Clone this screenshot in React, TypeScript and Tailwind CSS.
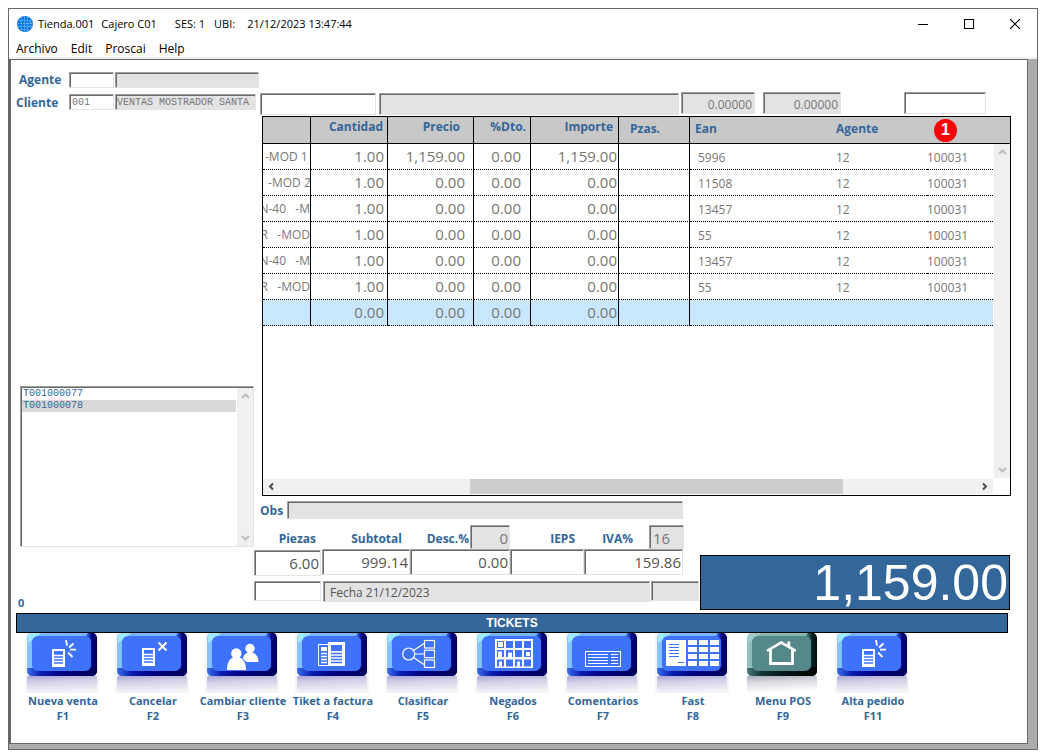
import type { ReactNode } from 'react';
import { clsx } from 'clsx';

interface Line {
  desc: string;
  clipLeft?: boolean;
  cantidad: string;
  precio: string;
  dto: string;
  importe: string;
  ean: string;
  agente: string;
  folio: string;
}

const lines: Line[] = [
  { desc: '-MOD 1', cantidad: '1.00', precio: '1,159.00', dto: '0.00', importe: '1,159.00', ean: '5996', agente: '12', folio: '100031' },
  { desc: ' -MOD 2', cantidad: '1.00', precio: '0.00', dto: '0.00', importe: '0.00', ean: '11508', agente: '12', folio: '100031' },
  { desc: 'N-40   -M', clipLeft: true, cantidad: '1.00', precio: '0.00', dto: '0.00', importe: '0.00', ean: '13457', agente: '12', folio: '100031' },
  { desc: 'R   -MOD', clipLeft: true, cantidad: '1.00', precio: '0.00', dto: '0.00', importe: '0.00', ean: '55', agente: '12', folio: '100031' },
  { desc: 'N-40   -M', clipLeft: true, cantidad: '1.00', precio: '0.00', dto: '0.00', importe: '0.00', ean: '13457', agente: '12', folio: '100031' },
  { desc: 'R   -MOD', clipLeft: true, cantidad: '1.00', precio: '0.00', dto: '0.00', importe: '0.00', ean: '55', agente: '12', folio: '100031' },
  { desc: '', cantidad: '0.00', precio: '0.00', dto: '0.00', importe: '0.00', ean: '', agente: '', folio: '' },
];

const FACE = '#3f72fb';

const receipt = (y: number) => (
  <>
    <rect x="28" y={y + 1} width="11" height="16" fill="none" stroke="#fff" strokeWidth="2" />
    <path d={`M29 ${y + 6.5}h9M29 ${y + 9.5}h9M29 ${y + 12.5}h9M29 ${y + 15.5}h9`} stroke="#fff" strokeWidth="1.3" />
  </>
);

const saleIcon = (
  <>
    {receipt(16)}
    <path d="M41 7l1 5.5M48.5 10.5l-4.5 4M45 16.6h6M43 19.5l4.5 4.5" stroke="#fff" strokeWidth="1.8" />
  </>
);

const cancelIcon = (
  <>
    {receipt(15)}
    <path d="M43.5 9.5l8 8M51.5 9.5l-8 8" stroke="#fff" strokeWidth="2" />
  </>
);

const peopleIcon = (
  <g fill="#fff">
    <circle cx="45" cy="15.5" r="4.7" />
    <path d="M37.5 29c0-5 2-8.5 5.5-9.5h4.5c4 1.5 6 5 6 9.5z" />
    <circle cx="31.3" cy="20.5" r="6.5" fill={FACE} />
    <path d="M36 24l5.5 5v3h-3z" fill={FACE} />
    <circle cx="31.3" cy="20.5" r="5.2" />
    <path d="M22 37c0-6.5 2-11.5 6.5-12.5h6c4.500 1.500 6.500 6 6.500 12.500z" />
  </g>
);

const invoiceIcon = (
  <>
    <rect x="23.5" y="11.5" width="10" height="21" fill="none" stroke="#fff" />
    <rect x="26" y="14" width="6" height="4" fill="#fff" />
    <path d="M26 20.5h6M26 23.5h6M26 26.5h6M26 29.5h6" stroke="#fff" strokeWidth="1.6" />
    <rect x="33" y="9" width="17" height="24" fill="#fff" />
    <rect x="36" y="12" width="11" height="6" fill={FACE} />
    <path d="M36 20.5h11M36 23.5h11M36 26.5h11M36 29.5h11" stroke={FACE} strokeWidth="1.3" />
  </>
);

const shareIcon = (
  <g fill="none" stroke="#fff" strokeWidth="1.2">
    <circle cx="23.7" cy="21" r="6" />
    <path d="M28.5 17.5L39 10.5M30 21h9M28.5 24.5L39 31.5" />
    <rect x="39.5" y="7.5" width="10" height="7.5" />
    <rect x="39.5" y="17.2" width="10" height="7.5" />
    <rect x="39.5" y="27" width="10" height="7.5" />
  </g>
);

const gridIcon = (
  <>
    <rect x="20" y="6" width="38" height="29" fill="#fff" />
    {[8, 17, 26.5].map((y) =>
      [22, 31, 40, 49].map((x) => <rect key={`${x}-${y}`} x={x} y={y} width="7" height="7" fill={FACE} />),
    )}
    <path d="M23 9h5v5h-5zM23 18.5h4v6h-4zM33 19.5h4v5h-4zM51 19h4v4h-4zM24 28.5h3v5h-3zM42 28.5h3v5h-3z" fill="#fff" />
  </>
);

const noteIcon = (
  <>
    <rect x="20.5" y="18.5" width="35" height="15" fill="none" stroke="#fff" />
    <path d="M23 21.5h20M23 24.5h20M23 27.5h20M23 30.5h20M46 21.5h7M46 24.5h7M46 27.5h7M46 30.5h7" stroke="#fff" />
  </>
);

const fastIcon = (
  <>
    <rect x="11" y="7" width="20" height="26" fill="#fff" />
    <path d="M14 11.5h10M14 14.5h10M14 17.5h10M14 20.5h10M14 23.5h10M23 29.5h6" stroke={FACE} />
    {[7, 14, 21, 28].map((y) =>
      [33, 44, 55].map((x) => <rect key={`${x}-${y}`} x={x} y={y} width="9" height="5" fill="#fff" />),
    )}
  </>
);

const houseIcon = (
  <g fill="none" stroke="#fff">
    <path d="M22 17.8L36.3 9.5L50.7 17.8" strokeWidth="2.6" />
    <path d="M25.5 16v14.5h22V16" strokeWidth="2.8" />
    <path d="M43.8 8.5v5" strokeWidth="2.8" />
  </g>
);

interface Action {
  label: string;
  hotkey: string;
  icon: ReactNode;
  teal?: boolean;
}

const actions: Action[] = [
  { label: 'Nueva venta', hotkey: 'F1', icon: saleIcon },
  { label: 'Cancelar', hotkey: 'F2', icon: cancelIcon },
  { label: 'Cambiar cliente', hotkey: 'F3', icon: peopleIcon },
  { label: 'Tiket a factura', hotkey: 'F4', icon: invoiceIcon },
  { label: 'Clasificar', hotkey: 'F5', icon: shareIcon },
  { label: 'Negados', hotkey: 'F6', icon: gridIcon },
  { label: 'Comentarios', hotkey: 'F7', icon: noteIcon },
  { label: 'Fast', hotkey: 'F8', icon: fastIcon },
  { label: 'Menu POS', hotkey: 'F9', icon: houseIcon, teal: true },
  { label: 'Alta pedido', hotkey: 'F11', icon: saleIcon },
];

function KeyDefs() {
  return (
    <svg className="absolute h-0 w-0" aria-hidden="true">
      <defs>
        <linearGradient id="side-blue" x1="0" x2="1" y1="0" y2="0">
          <stop offset="0" stopColor="#8cc6ff" />
          <stop offset="0.1" stopColor="#7db8fd" />
          <stop offset="0.85" stopColor="#3c6ef0" />
          <stop offset="0.93" stopColor="#00007c" />
          <stop offset="1" stopColor="#000060" />
        </linearGradient>
        <linearGradient id="side-teal" x1="0" x2="1" y1="0" y2="0">
          <stop offset="0" stopColor="#98c4c4" />
          <stop offset="0.1" stopColor="#8ab8b8" />
          <stop offset="0.85" stopColor="#4a7c7c" />
          <stop offset="0.93" stopColor="#062424" />
          <stop offset="1" stopColor="#000c0c" />
        </linearGradient>
        <linearGradient id="base-blue" x1="0" x2="1" y1="0" y2="0">
          <stop offset="0" stopColor="#3c70e8" />
          <stop offset="0.2" stopColor="#0a1eb4" />
          <stop offset="0.5" stopColor="#000080" />
          <stop offset="1" stopColor="#00005a" />
        </linearGradient>
        <linearGradient id="base-teal" x1="0" x2="1" y1="0" y2="0">
          <stop offset="0" stopColor="#4a7878" />
          <stop offset="0.2" stopColor="#123838" />
          <stop offset="0.5" stopColor="#041818" />
          <stop offset="1" stopColor="#000" />
        </linearGradient>
        <linearGradient id="reflection" x1="0" x2="0.15" y1="0" y2="1">
          <stop offset="0" stopColor="#a5a0d0" />
          <stop offset="0.4" stopColor="#d2cfe8" />
          <stop offset="1" stopColor="#f5f4f6" />
        </linearGradient>
        <linearGradient id="reflection-teal" x1="0" x2="0.15" y1="0" y2="1">
          <stop offset="0" stopColor="#a2a2b0" />
          <stop offset="0.4" stopColor="#d8d8e0" />
          <stop offset="1" stopColor="#fff" />
        </linearGradient>
      </defs>
    </svg>
  );
}

function ActionKey({ label, hotkey, icon, teal }: Action) {
  return (
    <button type="button" className="flex w-[90px] flex-col items-center text-[11px] leading-[15px] font-bold text-[#336699]">
      <svg width="74" height="60" viewBox="0 0 74 60" aria-hidden="true">
        {!teal && <rect width="74" height="60" fill="#f5f4f6" />}
        <path d="M2 60V45q0 -3 5 -3h60q5 0 5 3v15z" fill={teal ? 'url(#reflection-teal)' : 'url(#reflection)'} />
        <path d="M2 4q1 -3 3 -4h64q2 1 3 4v33q0 6 -6 6h-58q-6 0 -6 -6z" fill={teal ? 'url(#side-teal)' : 'url(#side-blue)'} />
        <path d="M2 35l6 0l4 2h50l5 -3l5 1v2q0 6 -6 6h-58q-6 0 -6 -6z" fill={teal ? 'url(#base-teal)' : 'url(#base-blue)'} />
        <path d="M5 0h12l-7 5l-7 5v-7q1 -2 2 -3z" fill={teal ? '#a6d0d0' : '#a8f4fc'} opacity="0.8" />
        <path d="M16 0h47l-3 4h-45z" fill={teal ? '#86b4b4' : '#7cb4fc'} />
        <rect x="7" y="3" width="59" height="35" rx="6" fill={teal ? '#558889' : FACE} />
        {icon}
      </svg>
      <span className="pl-0.5 whitespace-nowrap">{label}</span>
      <span className="pl-0.5">{hotkey}</span>
    </button>
  );
}

interface FieldProps {
  id?: string;
  label?: string;
  value?: string;
  className?: string;
}

function Field({ id, label, value = '', className }: FieldProps) {
  return (
    <input
      id={id}
      aria-label={label}
      defaultValue={value}
      className={clsx(
        'min-w-0 rounded-none border border-t-[#a0a0a0] border-r-[#e3e3e3] border-b-[#e3e3e3] border-l-[#a0a0a0] shadow-[inset_1px_1px_0_#696969] outline-none',
        className,
      )}
    />
  );
}

function Chevron({ dir }: { dir: 'up' | 'down' | 'left' | 'right' }) {
  const d = {
    up: 'M1 6l3.5 -3.5l3.5 3.5',
    down: 'M1 3l3.5 3.5l3.5 -3.5',
    left: 'M6 1.5l-3 3l3 3',
    right: 'M3 1.5l3 3l-3 3',
  }[dir];
  return (
    <svg width="9" height="9" viewBox="0 0 9 9" aria-hidden="true">
      <path d={d} fill="none" stroke="currentColor" strokeWidth="2" />
    </svg>
  );
}

function TitleBar() {
  return (
    <header className="flex h-[30px] items-center justify-between pl-2">
      <div className="flex items-center text-[11px]">
        <svg width="16" height="16" viewBox="0 0 16 16" className="mr-[5px]" aria-hidden="true">
          <circle cx="8" cy="8" r="8" fill="#1279e4" />
          <path
            d="M2 4.500h12M1 7.500h14M1 10.500h14M4 13.500h8M4.500 2v12M7.500 1v14M10.500 1v14M13.500 4v8"
            stroke="#6cc4fa"
            strokeWidth="0.8"
            strokeDasharray="1.500 1"
          />
        </svg>
        <span>Tienda.001</span>
        <span className="ml-[7px]">Cajero C01</span>
        <span className="ml-[18px]">SES: 1</span>
        <span className="ml-[9px]">UBI:</span>
        <span className="ml-3">21/12/2023 13:47:44</span>
      </div>
      <div className="flex">
        <button type="button" aria-label="Minimizar" className="flex h-7 w-11 items-center justify-center">
          <svg width="10" height="10"><path d="M0 5.500h10" stroke="#000" /></svg>
        </button>
        <button type="button" aria-label="Maximizar" className="flex h-7 w-12 items-center justify-center">
          <svg width="10" height="10"><rect x="0.5" y="0.5" width="9" height="9" fill="none" stroke="#000" /></svg>
        </button>
        <button type="button" aria-label="Cerrar" className="flex h-7 w-11 items-center justify-center">
          <svg width="10" height="10"><path d="M0 0l10 10M10 0l-10 10" stroke="#000" strokeWidth="1.2" /></svg>
        </button>
      </div>
    </header>
  );
}

function LinesTable() {
  const head = 'border-b border-black';
  const col = 'border-r border-r-black';
  const cell = 'border-b border-b-black p-0 [border-bottom-style:dotted]';
  return (
    <div className="ml-2 flex h-[380px] flex-col border border-black">
      <div className="flex min-h-0 flex-1">
        <div className="min-w-0 flex-1">
          <table className="w-full table-fixed border-separate border-spacing-0 text-[#777777]">
            <colgroup>
              <col className="w-12" />
              <col className="w-[77px]" />
              <col className="w-[86px]" />
              <col className="w-[57px]" />
              <col className="w-[88px]" />
              <col className="w-[71px]" />
              <col />
              <col className="w-[91px]" />
              <col className="w-[66px]" />
            </colgroup>
            <thead>
              <tr className="h-[27px] bg-[#c8c8c8] text-xs text-[#336699]">
                <th className={clsx(head, col)} />
                <th className={clsx(head, col, 'pr-1 pb-1.5 text-right')}>Cantidad</th>
                <th className={clsx(head, col, 'pr-[13px] pb-1.5 text-right')}>Precio</th>
                <th className={clsx(head, col, 'pr-1 pb-1.5 text-right')}>%Dto.</th>
                <th className={clsx(head, col, 'pr-[5px] pb-1.5 text-right')}>Importe</th>
                <th className={clsx(head, col, 'pb-0.5 pl-[11px] text-left')}>Pzas.</th>
                <th className={clsx(head, 'pb-0.5 pl-[5px] text-left')}>Ean</th>
                <th className={clsx(head, 'pb-0.5 text-left')}>Agente</th>
                <th className={clsx(head, 'p-0 pl-[7px]')}>
                  <span className="flex size-[23px] items-center justify-center rounded-full bg-[#fb0007] font-['Liberation_Sans'] text-base leading-none text-white">
                    1
                  </span>
                </th>
              </tr>
            </thead>
            <tbody className="text-[15px] leading-none">
              {lines.map((line, i) => (
                <tr key={i} className={clsx('h-[26px]', i === lines.length - 1 && 'bg-[#c9e7ff]')}>
                  <td className={clsx(cell, col)}>
                    <div
                      className={clsx(
                        'flex overflow-hidden text-xs whitespace-pre',
                        line.clipLeft ? 'justify-end' : 'pl-0.5',
                      )}
                    >
                      <span className="shrink-0">{line.desc}</span>
                    </div>
                  </td>
                  <td className={clsx(cell, col, 'pr-[3px] text-right')}>{line.cantidad}</td>
                  <td className={clsx(cell, col, 'pr-2 text-right')}>{line.precio}</td>
                  <td className={clsx(cell, col, 'pr-[9px] text-right')}>{line.dto}</td>
                  <td className={clsx(cell, col, 'pr-px text-right')}>{line.importe}</td>
                  <td className={clsx(cell, col)} />
                  <td className={clsx(cell, 'pt-0.5 pl-2 text-xs')}>{line.ean}</td>
                  <td className={clsx(cell, 'pt-0.5 text-xs')}>{line.agente}</td>
                  <td className={clsx(cell, 'pt-0.5 text-xs')}>{line.folio}</td>
                </tr>
              ))}
            </tbody>
          </table>
        </div>
        <div className="flex w-[17px] flex-col">
          <div className="h-[27px] border-b border-black bg-[#c8c8c8]" />
          <div className="ml-px flex flex-1 flex-col items-center justify-between bg-[#f0f0f0] py-1 text-[#bdbdbd]">
            <Chevron dir="up" />
            <Chevron dir="down" />
          </div>
        </div>
      </div>
      <div className="mt-px mr-[17px] mb-px flex h-[15px] items-center bg-[#f0f0f0] px-1 text-[#505050]">
        <Chevron dir="left" />
        <div className="grid h-full flex-1 grid-cols-[194fr_373fr_137fr]">
          <div className="col-start-2 bg-[#cdcdcd]" />
        </div>
        <Chevron dir="right" />
      </div>
    </div>
  );
}

export default function App() {
  return (
    <div className="flex min-h-screen bg-white p-2 pb-[5px] font-['Open_Sans','Noto_Sans',sans-serif] text-black">
      <KeyDefs />
      <div className="flex flex-1 flex-col border border-[#666666]">
        <TitleBar />
        <nav className="flex h-5 items-center gap-[13px] border-b-2 border-[#f0f0f0] pt-0.5 pl-[7px] text-xs">
          <button type="button">Archivo</button>
          <button type="button">Edit</button>
          <button type="button">Proscai</button>
          <button type="button">Help</button>
        </nav>
        <div className="flex flex-1 flex-col bg-[#ababab] pr-[9px] pb-[5px]">
          <main className="flex-1 border border-l-2 border-[#666666] bg-white pt-3">
            <div className="flex h-5 items-start">
              <label htmlFor="agente" className="w-[58px] pl-2 text-xs leading-4 font-bold text-[#336699]">Agente</label>
              <Field id="agente" className="h-4 w-[45px]" />
              <Field label="Nombre del agente" className="ml-px h-4 w-36 bg-[#e3e3e3]" />
            </div>
            <div className="flex h-6 items-start text-[#777777]">
              <label htmlFor="cliente" className="w-[58px] pt-[3px] pl-[5px] text-xs leading-4 font-bold text-[#336699]">
                Cliente
              </label>
              <Field id="cliente" value="001" className="mt-0.5 h-4 w-[45px] px-[2px] font-['Liberation_Mono'] text-[10px]" />
              <Field
                label="Nombre del cliente"
                value="VENTAS MOSTRADOR SANTA"
                className="mt-0.5 ml-px h-4 w-[141px] bg-[#e3e3e3] px-px font-['Liberation_Mono'] text-[10px]"
              />
              <Field label="Clave" className="mt-px ml-1 h-[22px] w-[116px]" />
              <Field label="Descripcion" className="mt-px ml-[3px] h-[22px] w-[300px] bg-[#e3e3e3]" />
              <Field label="Cantidad" value="0.00000" className="ml-[2px] h-[22px] w-[74px] bg-[#e3e3e3] px-[2px] pt-0.5 text-right text-xs" />
              <Field label="Precio" value="0.00000" className="ml-2 h-[22px] w-[78px] bg-[#e3e3e3] px-[2px] pt-0.5 text-right text-xs" />
              <Field label="Codigo" className="mr-[41px] ml-auto h-[22px] w-[82px]" />
            </div>

            <div className="flex">
              <aside className="w-[243px] shrink-0 pt-[270px]">
                <div className="ml-[9px] flex h-[161px] w-[234px] border border-t-[#a0a0a0] border-r-[#e3e3e3] border-b-[#e3e3e3] border-l-[#a0a0a0] shadow-[inset_1px_1px_0_#696969]">
                  <ul className="mt-px ml-px flex-1 font-['Liberation_Mono'] text-[10px] leading-3 text-[#336699]">
                    <li className="pl-px">T001000077</li>
                    <li className="bg-[#d9d9d9] pl-px">T001000078</li>
                  </ul>
                  <div className="mt-px ml-px flex w-4 flex-col items-center justify-between bg-[#f0f0f0] py-1 text-[#bdbdbd]">
                    <Chevron dir="up" />
                    <Chevron dir="down" />
                  </div>
                </div>
                <p className="mt-[50px] ml-[7px] text-[11px] leading-3 font-bold text-[#336699]">0</p>
              </aside>

              <section className="mr-4 min-w-0 flex-1">
                <LinesTable />
                <div className="flex items-start">
                  <div className="w-[446px] shrink-0 pt-[5px] text-xs">
                    <div className="flex h-6 items-start">
                      <label htmlFor="obs" className="w-[33px] pt-0.5 pl-[6px] font-bold text-[#336699]">Obs</label>
                      <Field id="obs" className="h-[18px] w-[396px] bg-[#e3e3e3]" />
                    </div>
                    <div className="flex h-6 items-center font-bold text-[#336699]">
                      <span className="w-[62px] pt-1 text-right">Piezas</span>
                      <span className="w-[86px] pt-1 text-right">Subtotal</span>
                      <span className="w-[67px] pt-1 text-right">Desc.%</span>
                      <Field label="Descuento" value="0" className="ml-px h-6 w-10 bg-[#e3e3e3] px-px pt-0.5 text-right text-[15px] font-normal text-[#777777]" />
                      <span className="w-[65px] pt-1 text-right">IEPS</span>
                      <span className="w-[58px] pt-1 text-right">IVA%</span>
                      <Field label="Porcentaje IVA" value="16" className="ml-4 h-6 w-[35px] bg-[#e3e3e3] px-[3px] pt-0.5 text-[15px] font-normal text-[#777777]" />
                    </div>
                    <div className="flex text-[15px] text-[#555555]">
                      <Field label="Piezas" value="6.00" className="mt-px h-[26px] w-[67px] px-px text-right" />
                      <Field label="Subtotal" value="999.14" className="ml-px h-[26px] w-[88px] px-px text-right" />
                      <Field label="Importe descuento" value="0.00" className="h-[26px] w-[100px] px-px text-right" />
                      <Field label="IEPS" className="h-[26px] w-[74px] px-px text-right" />
                      <Field label="IVA" value="159.86" className="h-[26px] w-[99px] px-px text-right" />
                    </div>
                    <div className="mt-[5px] flex text-[#555555]">
                      <Field label="Tipo" className="h-5 w-[67px]" />
                      <Field label="Fecha" value="Fecha 21/12/2023" className="ml-[2px] h-[21px] w-[327px] bg-[#e3e3e3] px-[6px] pt-0.5" />
                      <Field label="Estado" className="ml-px h-5 w-12 bg-[#e3e3e3]" />
                    </div>
                  </div>
                  <output className="mt-[59px] mr-px flex h-[55px] flex-1 items-center justify-end border border-black bg-[#336699] pr-px font-['Liberation_Sans'] text-[50px] leading-none text-white">
                    1,159.00
                  </output>
                </div>
              </section>
            </div>

            <h2 className="mt-[3px] mr-[19px] ml-[5px] h-5 border border-black bg-[#336699] text-center font-['Liberation_Sans'] text-xs leading-[18px] font-bold text-white">
              TICKETS
            </h2>
            <div className="ml-[6px] flex">
              {actions.map((action) => (
                <ActionKey key={action.hotkey} {...action} />
              ))}
            </div>
          </main>
        </div>
      </div>
    </div>
  );
}
